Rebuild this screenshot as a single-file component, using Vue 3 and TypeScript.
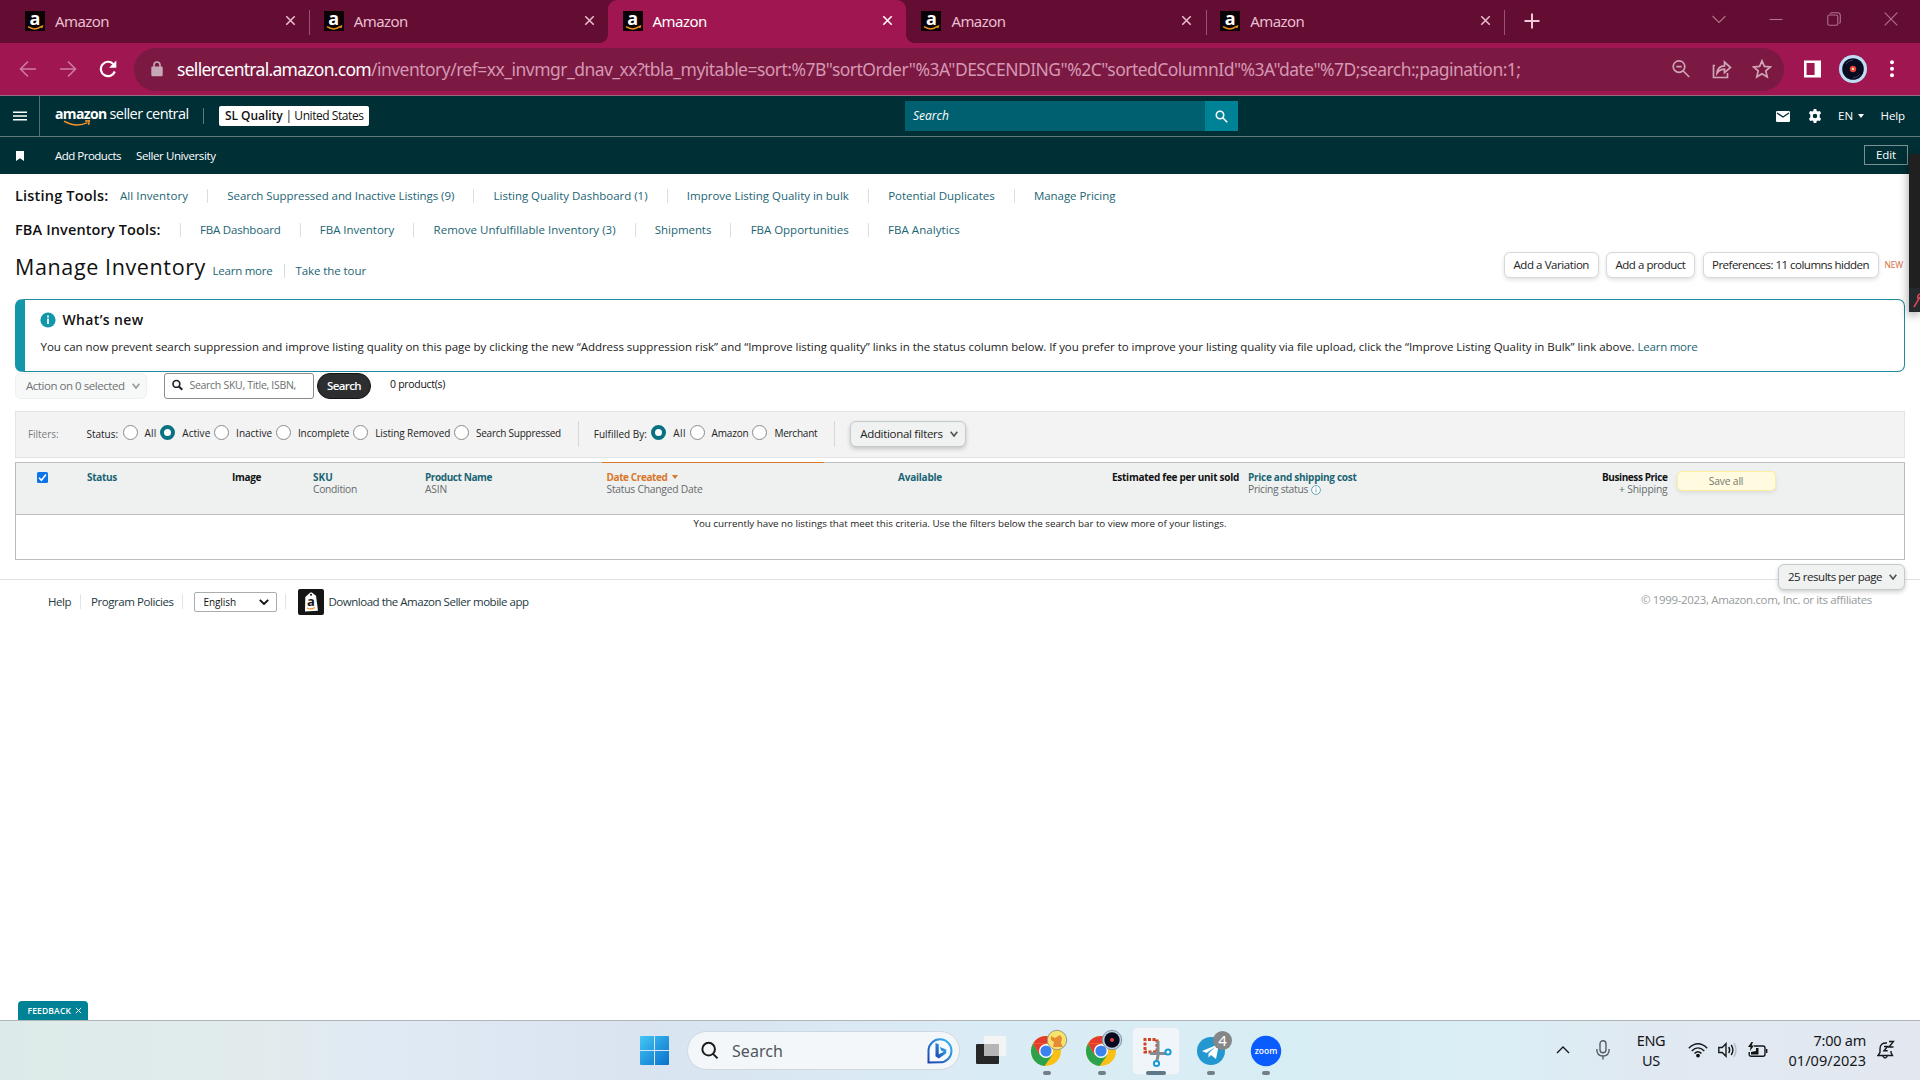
<script setup lang="ts">
interface Link { label: string; w: number }

const vFit = {
  mounted(el: HTMLElement, binding: { value: number }) {
    const count = (el.textContent ?? '').trim().length
    const natural = el.getBoundingClientRect().width
    el.style.letterSpacing = `${(binding.value - natural) / count}px`
  },
}

const tabs = [0, 1, 2, 3, 4]
const activeTab = 2

const listingTools: Link[] = [
  { label: 'All Inventory', w: 68 },
  { label: 'Search Suppressed and Inactive Listings (9)', w: 227 },
  { label: 'Listing Quality Dashboard (1)', w: 154 },
  { label: 'Improve Listing Quality in bulk', w: 162 },
  { label: 'Potential Duplicates', w: 106.5 },
  { label: 'Manage Pricing', w: 81.5 },
]
const fbaTools: Link[] = [
  { label: 'FBA Dashboard', w: 80.5 },
  { label: 'FBA Inventory', w: 74.5 },
  { label: 'Remove Unfulfillable Inventory (3)', w: 182 },
  { label: 'Shipments', w: 56.5 },
  { label: 'FBA Opportunities', w: 98 },
  { label: 'FBA Analytics', w: 72 },
]
const statuses = [
  { label: 'All', w: 12, on: false },
  { label: 'Active', w: 28, on: true },
  { label: 'Inactive', w: 36, on: false },
  { label: 'Incomplete', w: 51.5, on: false },
  { label: 'Listing Removed', w: 75, on: false },
  { label: 'Search Suppressed', w: 85, on: false },
]
const channels = [
  { label: 'All', w: 12.5, on: true },
  { label: 'Amazon', w: 37, on: false },
  { label: 'Merchant', w: 43, on: false },
]
</script>

<template>
  <div class="screen">
    <header class="tabs">
      <div v-for="t in tabs" :key="t" class="tab" :class="{ active: t === activeTab, split: t !== 1 && t !== 2 }">
        <span class="fav"><b>a</b><svg viewBox="0 0 20 6"><path d="M3 1.600q7 4.600 13 0l1.300-.4-.6 1.900" fill="none" stroke="#e8951c" stroke-width="1.500" /></svg></span>
        <span v-fit="54" class="tab-name">Amazon</span>
        <svg class="close" viewBox="0 0 12 12"><path d="M1.4 1.4 10.6 10.6M10.6 1.4 1.4 10.6" /></svg>
      </div>
      <svg class="plus" viewBox="0 0 16 16"><path d="M8 .5v15M.5 8h15" /></svg>
      <div class="win">
        <svg viewBox="0 0 14 14"><path d="M.5 4 7 10.500 13.500 4" /></svg>
        <svg viewBox="0 0 14 14"><path d="M.5 7.500h13" /></svg>
        <svg viewBox="0 0 14 14"><rect x=".8" y="3" width="10" height="10.300" rx="1.500" /><path d="M3 1.500Q3.400.7 5 .7h5.500q2.800 0 2.800 2.800v6q0 1.700-1 2" /></svg>
        <svg viewBox="0 0 14 14"><path d="M.7.7l12.600 12.600M13.300.7.7 13.300" /></svg>
      </div>
    </header>

    <div class="toolbar">
      <svg class="nav dim" viewBox="0 0 18 18"><path d="M17 9H1.500M9 1.500 1.500 9 9 16.500" /></svg>
      <svg class="nav dim" viewBox="0 0 18 18"><path d="M1 9h15.500M9 1.500 16.500 9 9 16.500" /></svg>
      <svg class="nav reload" viewBox="0 0 18 18"><path d="M15.800 11.500A7.200 7.200 0 1 1 14.200 3.900" /><path class="tip" d="M17.300.5v7.200h-7.200z" /></svg>
      <div class="omnibox">
        <svg class="lock" viewBox="0 0 12 16"><rect x=".3" y="5.500" width="11.400" height="9.700" rx="1.200" fill="#c5aab6" /><path d="M3 6V4a3 3 0 0 1 6 0v2" fill="none" stroke="#c5aab6" stroke-width="1.600" /></svg>
        <span v-fit="194" class="host">sellercentral.amazon.com</span><span v-fit="1149.500" class="path">/inventory/ref=xx_invmgr_dnav_xx?tbla_myitable=sort:%7B"sortOrder"%3A"DESCENDING"%2C"sortedColumnId"%3A"date"%7D;search:;pagination:1;</span>
        <div class="omni-icons">
          <svg viewBox="0 0 20 20"><circle cx="8" cy="7.600" r="5.800" /><path d="M12.200 12l6 6M5.300 7.600h5.400" /></svg>
          <svg viewBox="0 0 20 20"><path d="M3 6.500H1.500v12h14V14M5 14.200C5.500 9 9 6.800 12.500 6.800V3l6 5.500-6 5.200V10.200C9.500 10.200 7 11.400 5 14.200z" /></svg>
          <svg viewBox="0 0 20 20"><path d="M10 1.800l2.400 5.600 6 .5-4.600 4 1.400 6L10 14.700l-5.200 3.200 1.400-6-4.600-4 6-.5z" /></svg>
        </div>
      </div>
      <svg class="panel" viewBox="0 0 18 18"><path d="M0 0h18v18H0zM2.700 2.700v12.600h8.500V2.700z" fill="#fff" fill-rule="evenodd" /></svg>
      <svg class="avatar" viewBox="0 0 28 28"><circle cx="14" cy="14" r="14" fill="#bedcf4" /><circle cx="14" cy="14" r="10.800" fill="#090b20" /><path d="M7 9a9 9 0 0 1 7-4M21 19a9 9 0 0 1-7 4" stroke="#3c415b" fill="none" /><circle cx="14" cy="14" r="3.200" fill="#e2413e" /><circle cx="14" cy="14" r="1.300" fill="#ffd09b" /></svg>
      <svg class="dots" viewBox="0 0 4 18"><circle cx="2" cy="2.200" r="2" /><circle cx="2" cy="8.700" r="2" /><circle cx="2" cy="15.200" r="2" /></svg>
    </div>

    <div class="sc-head">
      <div class="burger"><svg viewBox="0 0 14 10"><path d="M0 1.200h14M0 5h14M0 8.800h14" stroke="#fff" stroke-width="1.500" /></svg></div>
      <div class="logo"><b v-fit="51.500">amazon</b><span v-fit="79">seller central</span><svg viewBox="0 0 28 7"><path d="M1 1.200Q13 8 24.500 2.600M22 1l4.300-.2-.7 4" fill="none" stroke="#f3952c" stroke-width="1.500" /></svg></div>
      <i class="head-sep"></i>
      <div class="account"><b v-fit="57.500">SL Quality</b><span v-fit="78">| United States</span></div>
      <div class="sc-search"><em v-fit="36">Search</em><span class="go"><svg viewBox="0 0 14 14"><circle cx="5.400" cy="5.400" r="4" /><path d="M8.600 8.600l4.600 4.600" /></svg></span></div>
      <svg class="mail" viewBox="0 0 14 11"><rect width="14" height="11" rx="1.300" fill="#fff" /><path d="M1 2l6 4 6-4" fill="none" stroke="#002f36" stroke-width="1.400" /></svg>
      <svg class="gear" viewBox="0 0 14 14"><path fill="#fff" fill-rule="evenodd" d="M5.700 0h2.600l.4 1.900 1.200.7 1.900-.7 1.300 2.300L11.700 5.600v2.800l1.400 1.400-1.300 2.300-1.900-.7-1.200.7-.4 1.900H5.700l-.4-1.900-1.200-.7-1.900.7L.9 9.800l1.400-1.400V5.600L.9 4.200l1.300-2.300 1.900.7 1.200-.7zM7 4.700a2.300 2.300 0 1 0 0 4.600 2.300 2.300 0 0 0 0-4.600z" /></svg>
      <span v-fit="15.500" class="en">EN</span><i class="head-caret"></i>
      <span v-fit="24.500" class="help">Help</span>
    </div>

    <div class="sc-sub">
      <svg class="mark" viewBox="0 0 8 10"><path d="M0 0h8v10L4 7.300 0 10z" fill="#fff" /></svg>
      <span v-fit="66">Add Products</span>
      <span v-fit="79.500" class="uni">Seller University</span>
      <span class="edit"><span v-fit="20">Edit</span></span>
    </div>

    <main class="page">
      <nav class="tools">
        <b v-fit="93.500">Listing Tools:</b>
        <a v-for="l in listingTools" :key="l.label"><span v-fit="l.w">{{ l.label }}</span></a>
      </nav>
      <nav class="tools fba">
        <b v-fit="145.500">FBA Inventory Tools:</b>
        <a v-for="l in fbaTools" :key="l.label"><span v-fit="l.w">{{ l.label }}</span></a>
      </nav>

      <div class="title-row">
        <h1 v-fit="191">Manage Inventory</h1>
        <a class="t1"><span v-fit="60">Learn more</span></a>
        <a class="t2"><span v-fit="70.500">Take the tour</span></a>
        <div class="actions">
          <button><span v-fit="75.500">Add a Variation</span></button>
          <button><span v-fit="70">Add a product</span></button>
          <button><span v-fit="157">Preferences: 11 columns hidden</span></button>
          <span v-fit="18.500" class="new">NEW</span>
        </div>
      </div>

      <section class="alert">
        <div class="alert-head">
          <svg viewBox="0 0 16 16"><circle cx="8" cy="8" r="7.600" fill="#1196aa" /><path d="M8 6.600v5.400M8 3.600v1.800" stroke="#fff" stroke-width="1.700" /></svg>
          <b v-fit="81">What’s new</b>
        </div>
        <p><span v-fit="1594">You can now prevent search suppression and improve listing quality on this page by clicking the new “Address suppression risk” and “Improve listing quality” links in the status column below. If you prefer to improve your listing quality via file upload, click the “Improve Listing Quality in Bulk” link above.</span><a><span v-fit="60">Learn more</span></a></p>
      </section>

      <div class="bulk">
        <span class="action"><span v-fit="98.500">Action on 0 selected</span><svg viewBox="0 0 8 6"><path d="M.7.800 4 5 7.300.8" /></svg></span>
        <span class="query"><svg viewBox="0 0 12 12"><circle cx="4.800" cy="4.800" r="3.700" /><path d="M7.600 7.600l3.600 3.600" stroke-width="2.200" /></svg><span v-fit="106.500">Search SKU, Title, ISBN,</span></span>
        <span class="submit"><b v-fit="34">Search</b></span>
        <span v-fit="55" class="count">0 product(s)</span>
      </div>

      <div class="filters">
        <span class="f-title"><span v-fit="30.500">Filters:</span></span>
        <span v-fit="31.500" class="f-label">Status:</span>
        <label v-for="s in statuses" :key="s.label" class="opt"><i class="radio" :class="{ on: s.on }"></i><span v-fit="s.w">{{ s.label }}</span></label>
        <i class="f-sep"></i>
        <span v-fit="53" class="f-label">Fulfilled By:</span>
        <label v-for="c in channels" :key="c.label" class="opt"><i class="radio" :class="{ on: c.on }"></i><span v-fit="c.w">{{ c.label }}</span></label>
        <i class="f-sep"></i>
        <span class="drop"><span v-fit="82.500">Additional filters</span><svg viewBox="0 0 8 6"><path d="M.7.800 4 5 7.300.8" /></svg></span>
      </div>

      <section class="table">
        <div class="thead">
          <div><i class="check"><svg viewBox="0 0 11 11"><path d="M2 5.800 4.400 8.200 9 2.600" /></svg></i></div>
          <div><b v-fit="30" class="teal">Status</b></div>
          <div><b v-fit="29">Image</b></div>
          <div><b v-fit="20" class="teal">SKU</b><small v-fit="44">Condition</small></div>
          <div><b v-fit="67" class="teal">Product Name</b><small v-fit="22">ASIN</small></div>
          <div class="sorted"><b><span v-fit="61">Date Created</span><i></i></b><small v-fit="96">Status Changed Date</small></div>
          <div><b v-fit="44" class="teal">Available</b></div>
          <div><b v-fit="127">Estimated fee per unit sold</b></div>
          <div><b v-fit="108.500" class="teal">Price and shipping cost</b><small><span v-fit="60">Pricing status</span><svg viewBox="0 0 10 10"><circle cx="5" cy="5" r="4.400" /><path d="M5 4.300v3M5 2.500v1" /></svg></small></div>
          <div class="right"><b v-fit="65.500">Business Price</b><small v-fit="48.500">+ Shipping</small></div>
          <div><span class="save"><span v-fit="34.500">Save all</span></span></div>
        </div>
        <div class="empty"><span v-fit="533">You currently have no listings that meet this criteria. Use the filters below the search bar to view more of your listings.</span></div>
      </section>

      <div class="pager"><span class="drop"><span v-fit="94">25 results per page</span><svg viewBox="0 0 8 6"><path d="M.7.800 4 5 7.300.8" /></svg></span></div>

      <footer class="foot">
        <span v-fit="23">Help</span><i></i>
        <span v-fit="82.500" class="policies">Program Policies</span><i></i>
        <span class="lang"><span v-fit="32.500">English</span><svg viewBox="0 0 10 6"><path d="M.8.800 5 5 9.200.8" /></svg></span><i></i>
        <svg class="app" viewBox="0 0 26 26"><rect width="26" height="26" rx="2" fill="#151515" /><path d="M7.300 8l5-4.500h1.500L18 6.800l2 15-13 .8z" fill="#fff" /><circle cx="13" cy="5.800" r="1" fill="#151515" /><text x="13" y="17" text-anchor="middle" class="app-a">a</text><path d="M9 19q4 2.200 8-.6" fill="none" stroke="#f3952c" stroke-width="1.200" /></svg>
        <span v-fit="200">Download the Amazon Seller mobile app</span>
        <span class="copy"><span v-fit="231">© 1999-2023, Amazon.com, Inc. or its affiliates</span></span>
      </footer>

      <div class="feedback"><b v-fit="43.500">FEEDBACK</b><svg viewBox="0 0 8 8"><path d="M1 1l6 6M7 1 1 7" /></svg></div>
    </main>

    <div class="taskbar">
      <svg class="start" viewBox="0 0 29 29"><defs><linearGradient id="wl" x1="0" y1="0" x2="1" y2="1"><stop offset="0" stop-color="#43c8f7" /><stop offset="1" stop-color="#0a6fc9" /></linearGradient></defs><path fill="url(#wl)" d="M1 0h13v14H0V1q0-1 1-1zM15 0h13q1 0 1 1v13H15zM0 15h14v14H1q-1 0-1-1zM15 15h14v13q0 1-1 1H15z" /></svg>
      <div class="t-search">
        <svg class="mag" viewBox="0 0 20 20"><circle cx="8.500" cy="8.500" r="7" /><path d="M13.400 13.800l5 5" /></svg>
        <span v-fit="51">Search</span>
        <svg class="bing" viewBox="0 0 26 26"><defs><linearGradient id="bg" x1="0" y1="1" x2="1" y2="0"><stop offset="0" stop-color="#1b3fae" /><stop offset="1" stop-color="#39bdf2" /></linearGradient></defs><path d="M1.500 24.500V12.500A11.500 11.500 0 1 1 13 24.300z" fill="#f7fbff" stroke="url(#bg)" stroke-width="2" /><path d="M8.500 5l3.300 1.300v10l5-2.600-2.500-1.300-1.500-3.300 6.500 2.400v3.800L11.800 20.500 8.500 18.300z" fill="url(#bg)" /></svg>
      </div>
      <svg class="view" viewBox="0 0 30 28"><rect y="8" width="23" height="20" rx="1" fill="#272727" /><rect x="8" y="0" width="22" height="20" rx="1" fill="#f4f4f4" /><path d="M8 8h15v12H8z" fill="#b5b5b5" /></svg>
      <div class="apps">
        <div v-for="n in 2" :key="n" class="app-slot">
          <svg viewBox="0 0 48 48"><circle cx="23" cy="24" r="15" fill="#fbc016" /><path d="M10 16.500A15 15 0 0 1 36 16.500H23z" fill="#e33b2e" /><path d="M10 16.500A15 15 0 0 0 21.500 39L29.500 27.700 16.500 27.700z" fill="#2ba24c" /><path d="M10 16.500l6.500 11.200L23 16.500z" fill="#e33b2e" /><circle cx="23" cy="24" r="7" fill="#fff" /><circle cx="23" cy="24" r="5.600" fill="#3c82ee" />
            <g v-if="n === 1"><circle cx="34" cy="13" r="9.700" fill="#f7e36b" stroke="#999a85" /><path d="M28 9l4 2 5-3 2 3-1 5 2 4H30l1-5-3-2z" fill="#e68a35" /></g>
            <g v-else><circle cx="34" cy="13" r="9.700" fill="#bdd2e5" stroke="#86929f" /><circle cx="34" cy="13" r="7.700" fill="#090b20" /><circle cx="34" cy="13" r="2" fill="#e2413e" /></g>
          </svg><i></i>
        </div>
        <div class="app-slot current">
          <svg viewBox="0 0 48 48"><path d="M13 23V12.500h12V25H13z" fill="none" stroke="#cf4320" stroke-width="3" stroke-dasharray="3 1.500" /><path d="M26 14v14.500l-1 5M18 26.500h16" stroke="#858b90" stroke-width="3" fill="none" /><circle cx="24.500" cy="36.500" r="2.600" fill="#fff" stroke="#169bd7" stroke-width="2" /><circle cx="36" cy="25" r="2.600" fill="#fff" stroke="#169bd7" stroke-width="2" /></svg><i></i>
        </div>
        <div class="app-slot">
          <svg viewBox="0 0 48 48"><circle cx="24" cy="24" r="14" fill="#2397cf" /><path d="M15 24l17-7-3 15-5-4-2.500 2.500v-4L28 20l-8.500 6z" fill="#fff" /><circle cx="35.500" cy="13.500" r="9.500" fill="#858787" /><text x="35.500" y="19" text-anchor="middle" class="badge">4</text></svg><i></i>
        </div>
        <div class="app-slot">
          <svg viewBox="0 0 48 48"><circle cx="24" cy="24" r="15.200" fill="#0b5cff" /><text x="24" y="26.600" text-anchor="middle" class="zoom">zoom</text></svg><i></i>
        </div>
      </div>
      <div class="tray">
        <svg class="up" viewBox="0 0 14 8"><path d="M1 7l6-6 6 6" /></svg>
        <svg class="mic" viewBox="0 0 14 20"><rect x="4" y=".8" width="6" height="12" rx="3" /><path d="M.8 9q0 7 6.200 7t6.200-7M7 16v3.500" /></svg>
        <div class="kb"><span v-fit="28.500">ENG</span><span v-fit="18">US</span></div>
        <svg class="wifi" viewBox="0 0 20 16"><path d="M.8 6.200Q10-2.500 19.200 6.200M3.700 9Q10 2.700 16.300 9M6.500 11.600Q10 8 13.500 11.600" /><circle cx="10" cy="13.600" r="1.900" fill="#111" stroke="none" /></svg>
        <svg class="vol" viewBox="0 0 20 16"><path d="M.8 5.500h3.400L8 1.700v12.600l-3.800-3.800H.8zM10.700 5q2 3 0 6M13.200 3q3.400 5 0 10" /><path d="M16 1.200q4 6.800 0 13.600" stroke="#b6bac4" /></svg>
        <svg class="bat" viewBox="0 0 20 16"><path d="M6 4h9q2 0 2 2v6.200q0 2-2 2H3.200q-2 0-2-2V10M18.700 7v4" /><path d="M3 12.500V10l5-1V6h2.500v6.500z" fill="#111" stroke="none" /><path d="M3.500 0L0 5h2.500L2 9l4-5.500H3.500L5 0z" fill="#111" stroke="none" /></svg>
        <div class="clock"><span v-fit="52.500">7:00 am</span><span v-fit="77.500">01/09/2023</span></div>
        <svg class="bell" viewBox="0 0 18 20"><path d="M10 3Q3 2.500 3 9v3.500L1 15.500h14.500l-1.500-3V11M5.800 16q2.200 4 4.600 0M7 6.500h3.500L7 10.800h3.700M12 1.500h4.400L12 7h4.500" /></svg>
      </div>
    </div>

    <div class="call"><svg viewBox="0 0 11 24"><path d="M5 19 11 9M9.500 12q-2-5 1.500-6" fill="none" stroke="#e04556" stroke-width="1.600" /></svg></div>
  </div>
</template>

<style>
body { margin: 0; overflow: hidden; }
</style>

<style scoped>
.screen { position: relative; width: 1920px; height: 1080px; display: flex; flex-direction: column; overflow: hidden; background: #fff; font: 12px/16px "Open Sans", "Noto Sans", sans-serif; color: #111; }
.screen * { box-sizing: border-box; }
.screen svg { flex: none; display: block; }
.screen span, .screen b, .screen em, .screen h1, .screen small { white-space: nowrap; flex: none; }

.tabs { height: 43px; background: #640d32; display: flex; align-items: center; padding-left: 10px; flex: none; }
.tab { position: relative; width: 298.800px; height: 43px; flex: none; display: flex; align-items: center; padding: 0 13px 2px 15px; color: #e9bdd0; }
.tab.split::after, .tab:first-child::after { content: ""; position: absolute; right: -1.500px; top: 10px; width: 1px; height: 25px; background: #9b5374; }
.tab.active { background: #a01650; color: #fff; border-radius: 9px 9px 0 0; }
.tab.active::before, .tab.active::after { content: ""; position: absolute; top: auto; bottom: 0; width: 8px; height: 8px; }
.tab.active::before { left: -8px; background: radial-gradient(circle at 0 0, transparent 7.500px, #a01650 8px); }
.tab.active::after { right: -8px; background: radial-gradient(circle at 100% 0, transparent 7.500px, #a01650 8px); }
.fav { display: flex; flex-direction: column; align-items: center; width: 20px; height: 20px; margin-right: 10px; background: #0b0206; color: #fff; }
.fav b { font-size: 18px; line-height: 14px; height: 14px; font-weight: 700; }
.fav svg { width: 20px; height: 6px; }
.tab-name { font-family: "Noto Sans", sans-serif; font-size: 15px; }
.close { width: 11px; height: 11px; margin-left: auto; fill: none; stroke: currentColor; stroke-width: 1.700; }
.plus { width: 16px; height: 16px; margin: -1px 0 0 20.500px; fill: none; stroke: #efc8d8; stroke-width: 2; }
.win { display: flex; gap: 43.300px; margin: -6px 22px 0 auto; }
.win svg { width: 14px; height: 14px; fill: none; stroke: #b0718e; stroke-width: 1.100; }

.toolbar { height: 53px; background: #a01650; border-bottom: 1px solid #9a6a80; display: flex; align-items: center; padding: 0 26px 0 18.500px; flex: none; }
.nav { width: 18px; height: 18px; margin-right: 22px; fill: none; stroke: #fff; stroke-width: 2.200; margin-top: -1px; }
.nav.dim { stroke: #cf7ba1; stroke-width: 1.600; }
.nav.reload { margin-right: 17.500px; }
.nav .tip { fill: #fff; stroke: none; }
.omnibox { width: 1650px; height: 43px; border-radius: 22px; background: #7b1942; display: flex; align-items: center; padding: 0 12px 1px 17px; font: 17.500px/24px "Noto Sans", sans-serif; color: #d597b2; margin-top: 1px; flex: none; }
.lock { width: 12px; height: 16px; margin-right: 14px; }
.host { color: #fff; }
.omni-icons { display: flex; gap: 20.300px; margin-left: auto; }
.omni-icons svg { width: 20px; height: 20px; fill: none; stroke: #cfa3b8; stroke-width: 1.700; }
.panel { width: 17px; height: 18px; margin-left: 20px; }
.avatar { width: 28px; height: 28px; margin-left: 18px; }
.dots { width: 4px; height: 18px; margin-left: auto; fill: #fff; }

.sc-head { height: 41px; background: #002f36; border-bottom: 1px solid #61797d; display: flex; align-items: center; flex: none; color: #fff; font-size: 11.500px; font-weight: 500; }
.burger { width: 40px; height: 40px; border-right: 1px solid #536d71; padding: 15px 0 0 12.500px; }
.burger svg { width: 14px; height: 10px; }
.logo { position: relative; display: flex; align-items: center; width: 133px; height: 20px; margin: -4px 0 0 15px; font-size: 14.500px; gap: 3px; flex: none; }
.logo b { font-weight: 700; font-size: 14px; }
.logo svg { position: absolute; left: 8px; top: 16px; width: 28px; height: 7px; }
.head-sep { width: 1px; height: 16px; background: #61797d; margin-left: 15px; }
.account { width: 150px; height: 20px; margin-left: 15px; background: #fff; border-radius: 2px; color: #111; display: flex; align-items: center; gap: 3px; padding-left: 6px; font-size: 12px; }
.account b { font-weight: 600; }
.sc-search { width: 333px; height: 30px; background: #00606f; margin-left: 536px; display: flex; align-items: center; justify-content: space-between; padding-left: 8px; font-size: 12px; }
.go { width: 33px; height: 30px; background: #008296; display: flex; align-items: center; justify-content: center; }
.go svg { width: 13px; height: 13px; fill: none; stroke: #fff; stroke-width: 1.700; }
.mail { width: 14px; height: 11px; margin-left: 538px; }
.gear { width: 14px; height: 14px; margin-left: 17.500px; }
.en { margin-left: 16.500px; }
.head-caret { border: 3.500px solid transparent; border-top: 4px solid #fff; border-bottom: 0; margin-left: 4px; }
.help { margin-left: 17px; }

.sc-sub { height: 37px; background: #002f36; display: flex; align-items: center; flex: none; color: #fff; font-size: 11.500px; font-weight: 500; padding: 0 12px 0 16px; }
.mark { width: 8px; height: 10px; margin-right: 31px; }
.uni { margin-left: 15px; }
.edit { width: 44px; height: 20px; border: 1px solid #7b9093; margin: -2px 0 0 auto; display: flex; align-items: center; justify-content: center; }

.page { position: relative; height: 846px; display: flex; flex-direction: column; padding: 0 15px; flex: none; }
a, .teal { color: #1b6573; }
.tools { display: flex; align-items: center; height: 16px; margin-top: 13.500px; flex: none; font-size: 11.500px; }
.tools.fba { margin-top: 18px; }
.tools b { font-size: 14.500px; font-weight: 600; }
.tools a { display: flex; align-items: center; height: 14px; padding: 0 19.150px; border-right: 1px solid #dcdfdf; }
.tools a:last-child { border: 0; }
.tools a:nth-child(2) { padding-left: 11.500px; }
.tools.fba a:nth-child(2) { padding-left: 19px; border-left: 1px solid #dcdfdf; margin-left: 19.500px; }
.title-row { display: flex; align-items: center; height: 30px; margin-top: 14px; flex: none; font-size: 11.500px; }
h1 { font-size: 21.500px; font-weight: 400; line-height: 30px; margin: 0; }
.title-row a { margin-top: 8px; height: 14px; line-height: 14px; }
.t1 { margin-left: 6.500px; padding-right: 11px; border-right: 1px solid #d8dbdb; }
.t2 { margin-left: 11px; }
.actions { display: flex; align-items: center; margin-left: auto; height: 26px; margin-top: -3px; }
.actions button { height: 26px; border: 1px solid #d5d9d9; border-radius: 6px; background: #fff; box-shadow: 0 2px 4px rgba(15,17,17,.12); font: inherit; color: #222; padding: 0 8.500px; margin-right: 7.500px; flex: none; }
.actions button:nth-child(3) { margin-right: 6px; }
.new { color: #d4683c; font-size: 8.500px; margin-right: 2px; }

.alert { height: 73px; margin-top: 17.500px; border: 1.500px solid #1f8a9b; border-left: 10px solid #1196aa; border-radius: 7px; flex: none; padding: 12px 0 0 14.500px; }
.alert-head { display: flex; align-items: center; height: 16px; gap: 7px; }
.alert-head svg { width: 16px; height: 16px; }
.alert-head b { font-size: 14px; font-weight: 600; }
.alert p { margin: 11px 0 0 1px; display: flex; gap: 3px; font-size: 11.500px; color: #222; }
.bulk { display: flex; align-items: center; height: 27px; margin-top: .5px; flex: none; font-size: 11.500px; }
.action { display: flex; align-items: center; width: 132px; height: 26px; padding-left: 10px; background: #f7f8f8; border: 1px solid #eef0f0; border-radius: 6px; color: #6f7373; gap: 7px; }
.action svg, .drop svg { width: 8px; height: 6px; fill: none; stroke: #9a9d9d; stroke-width: 1.700; }
.query { display: flex; align-items: center; width: 150px; height: 26px; margin-left: 17px; border: 1px solid #888c8c; border-radius: 3px; padding: 0 0 2px 7px; gap: 6.500px; color: #6b6f6f; font-size: 10.500px; }
.query svg { width: 11px; height: 12px; fill: none; stroke: #222; stroke-width: 1.800; }
.submit { width: 54px; height: 26px; border-radius: 13px; background: #2c2e30; border: 1px solid #111; color: #fff; display: flex; align-items: center; justify-content: center; margin-left: 3px; }
.submit b { font-weight: 600; }
.count { font-size: 10.500px; margin: -4px 0 0 19px; }

.filters { height: 47px; margin-top: 11px; background: #f3f3f3; border: 1px solid #e2e3e3; display: flex; align-items: center; flex: none; font-size: 10px; color: #222; padding-left: 12px; }
.f-title { width: 58.500px; color: #7a7d7d; }
.f-label { margin-right: 4.500px; }
.opt { display: flex; align-items: center; gap: 7px; margin: -3px 3.800px 0 0; flex: none; }
.radio { width: 15px; height: 15px; border-radius: 50%; border: 1px solid #888c8c; background: #fff; flex: none; }
.radio.on { border: 4.500px solid #087282; }
.f-sep { width: 1px; height: 26px; background: #d5d8d8; margin: 0 15px 0 13px; }
.drop { display: flex; align-items: center; height: 26px; border: 1px solid #c4c9c9; border-radius: 6px; background: #f0f2f2; box-shadow: 0 2px 4px rgba(15,17,17,.2); padding: 0 7px 0 9px; gap: 7px; font-size: 11.500px; color: #222; }
.filters .drop { margin-top: -1px; }
.drop svg { stroke: #555; }

.table { margin-top: 4px; height: 98px; border: 1px solid #b9bdbd; flex: none; }
.thead { height: 52px; background: #eff1f1; border-bottom: 1px solid #b9bdbd; display: grid; grid-template-columns: 71px 145px 81px 112px 177px 296px 214px 136px 354px 68px 1fr; font-size: 10.300px; line-height: 12px; }
.thead > div { display: flex; flex-direction: column; align-items: flex-start; padding-top: 8px; position: relative; white-space: nowrap; }
.thead b { font-weight: 700; font-size: 10px; }
.thead small { font-size: 10.300px; color: #666a6a; }
.thead small:has(svg) { display: flex; gap: 3px; }
.thead small svg { width: 10px; height: 10px; margin-top: 2px; fill: #fff; stroke: #68a8b5; stroke-width: 1; }
.sorted b { color: #d9772b; display: flex; align-items: center; gap: 4px; }
.sorted b i { border: 3.500px solid transparent; border-top: 4px solid #d9772b; border-bottom: 0; }
.thead > .sorted { padding-left: 4.500px; }
.sorted::before { content: ""; position: absolute; left: 0; top: -1px; width: 222px; height: 1.500px; background: #d9772b; }
.thead > .right { align-items: flex-end; width: 65.500px; }
.check { width: 11px; height: 11px; background: #0b74e8; border-radius: 1.500px; margin: 1px 0 0 21px; }
.check svg { width: 11px; fill: none; stroke: #fff; stroke-width: 1.600; }
.save { width: 99px; height: 20px; background: #fffae0; border: 1px solid #fbee9d; border-radius: 5px; box-shadow: 0 2px 4px rgba(15,17,17,.08); color: #77776e; display: flex; align-items: center; justify-content: center; margin-left: 6.500px; }
.empty { display: flex; justify-content: center; padding-top: 1px; font-size: 9.800px; color: #222; }
.pager { position: relative; z-index: 1; display: flex; justify-content: flex-end; height: 19px; padding-top: 4px; flex: none; }
.foot { height: 46px; border-top: 1px solid #dfe2e2; margin: 0 -15px; padding: 0 48px 1px; display: flex; align-items: center; flex: none; font-size: 11.500px; color: #23393e; }
.foot i { width: 1px; height: 15px; background: #e2e4e4; margin: 0 9px; }
.policies { margin: 0 -1px 0 1px; }
.lang { width: 83px; height: 20px; border: 1px solid #aaadad; border-radius: 2px; display: flex; align-items: center; justify-content: space-between; padding: 0 7px 0 9px; font-size: 10px; margin: 0 -1px 0 2px; color: #111; }
.lang svg { width: 10px; height: 6px; fill: none; stroke: #111; stroke-width: 1.900; }
.app { width: 26px; height: 26px; margin: 0 5px 0 3px; }
.app-a { font: bold 13px "Open Sans", sans-serif; fill: #151515; }
.copy { margin: -4px 0 0 auto; color: #979b9b; }
.feedback { position: absolute; left: 18px; bottom: 0; width: 70px; height: 19px; background: #008296; border-radius: 4px 4px 0 0; color: #fff; display: flex; align-items: center; padding-left: 9.500px; gap: 4px; font-size: 8.500px; }
.feedback b { font-weight: 600; }
.feedback svg { width: 7px; height: 7px; fill: none; stroke: #fff; stroke-width: 1.100; }

.taskbar { height: 60px; border-top: 1px solid #aeb6b9; background: linear-gradient(90deg, #dcebe9 0, #e2ebec 260px, #dfeaf5 390px, #d9e4f0 640px, #daebf5 950px, #d7eef4 1300px, #dbeef5 1500px, #e0e9f2 1640px, #e3e8f0 1920px); display: flex; align-items: center; padding-left: 640px; flex: none; font-family: "Noto Sans", sans-serif; }
.start { width: 29px; height: 29px; }
.t-search { width: 273px; height: 39px; margin-left: 18px; border-radius: 20px; background: #f3f7fa; border: 1px solid #d0d8df; display: flex; align-items: center; padding: 0 6px 0 13px; font-size: 16px; color: #50565c; }
.mag { width: 18px; height: 19px; margin-right: 13px; fill: none; stroke: #1b1b1b; stroke-width: 2.200; }
.bing { width: 26px; height: 26px; margin-left: auto; }
.view { width: 30px; height: 28px; margin: -1px 0 0 16px; }
.apps { display: flex; gap: 6.700px; margin-left: 17px; }
.app-slot { position: relative; width: 48px; height: 48px; border-radius: 5px; }
.app-slot.current { background: #f0f5fa; border: 1px solid #e4ebf1; }
.app-slot svg { width: 48px; height: 48px; }
.app-slot.current svg { margin: -1px; }
.app-slot i { position: absolute; left: 20px; bottom: 0; width: 8px; height: 4px; border-radius: 2px; background: #727f87; }
.app-slot.current i { left: 13px; width: 20px; bottom: -1px; background: #5f7888; }
.badge { font: 15px "Noto Sans", sans-serif; fill: #fff; }
.zoom { font: 600 8.500px "Open Sans", sans-serif; fill: #fff; }
.tray { display: flex; align-items: center; margin: -1px 25.500px 0 auto; font-size: 14.500px; line-height: 20px; color: #15181b; }
.tray svg { fill: none; stroke: #15181b; stroke-width: 1.400; }
.up { width: 14px; height: 8px; margin-right: 26px; }
.tray .mic { width: 14px; height: 20px; margin-right: 26.500px; stroke: #555d62; }
.kb { width: 29px; display: flex; flex-direction: column; align-items: center; margin-right: 22px; }
.wifi { width: 20px; height: 16px; margin-right: 10px; }
.vol { width: 20px; height: 16px; margin-right: 10px; }
.bat { width: 20px; height: 16px; margin-right: 20.500px; }
.clock { width: 78px; display: flex; flex-direction: column; align-items: flex-end; margin-right: 10.500px; }
.bell { width: 18px; height: 20px; }

.call { position: absolute; right: 0; top: 154px; width: 11px; height: 158px; background: linear-gradient(#202020 134px, #242a2b 134px); box-shadow: -1px 3px 10px rgba(0,0,0,.35); }
.call svg { position: absolute; left: 0; bottom: 0; width: 11px; height: 24px; }
</style>
